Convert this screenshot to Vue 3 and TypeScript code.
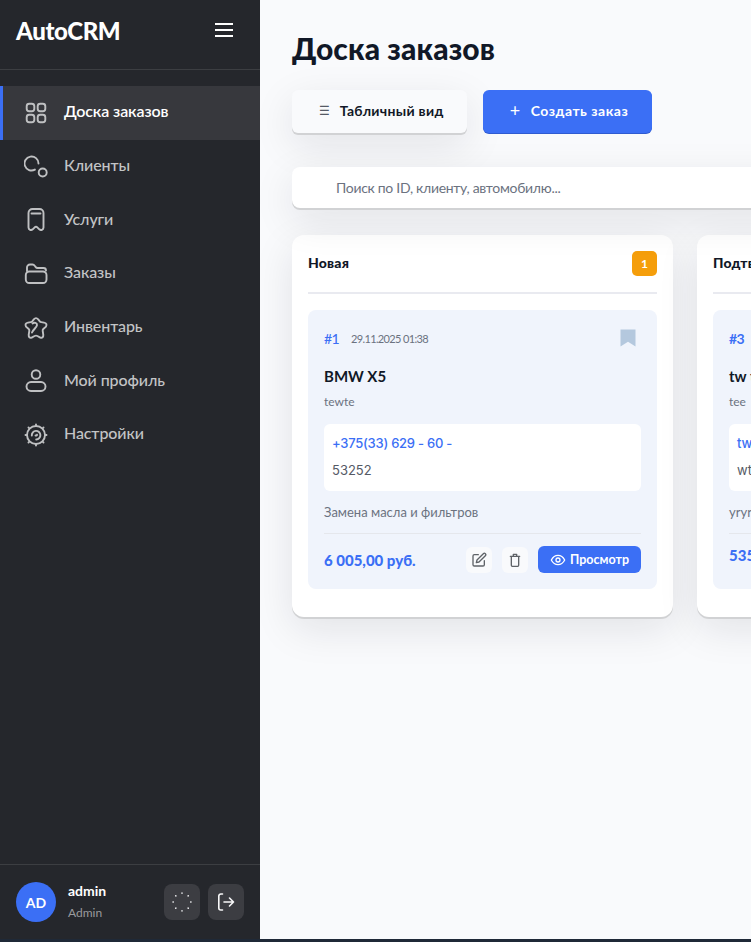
<script setup lang="ts">
const nav = [
  { label: 'Доска заказов', icon: 'board', active: true },
  { label: 'Клиенты', icon: 'clients' },
  { label: 'Услуги', icon: 'services' },
  { label: 'Заказы', icon: 'orders' },
  { label: 'Инвентарь', icon: 'inventory' },
  { label: 'Мой профиль', icon: 'profile' },
  { label: 'Настройки', icon: 'settings' },
]
</script>

<template>
  <div class="app">
    <aside class="sidebar">
      <div class="brand">
        <span class="logo">AutoCRM</span>
        <button class="burger"><i></i><i></i><i></i></button>
      </div>
      <nav class="nav">
        <a v-for="item in nav" :key="item.label" class="nav-item" :class="{ active: item.active }">
          <svg class="nav-icon" viewBox="0 0 24 24" fill="none" stroke="currentColor" stroke-width="1.9" stroke-linecap="round" stroke-linejoin="round">
            <template v-if="item.icon === 'board'">
              <rect x="2.7" y="2.7" width="7.6" height="7.6" rx="2.5" /><rect x="13.7" y="2.7" width="7.6" height="7.6" rx="2.5" />
              <rect x="2.7" y="13.7" width="7.6" height="7.6" rx="2.5" /><rect x="13.7" y="13.7" width="7.6" height="7.6" rx="2.5" />
            </template>
            <template v-else-if="item.icon === 'clients'">
              <path d="M14.500 8.500A7 7 0 1 0 10.900 14.600" /><circle cx="18.700" cy="17.500" r="4" />
            </template>
            <template v-else-if="item.icon === 'services'">
              <path d="M4.500 5a4 4 0 0 1 4-4h7a4 4 0 0 1 4 4v14.500a2.500 2.500 0 0 1-4.200 1.800l-2-2a1.800 1.800 0 0 0-2.600 0l-2 2a2.500 2.500 0 0 1-4.200-1.800Z" /><path d="M7.500 5.500h9" />
            </template>
            <template v-else-if="item.icon === 'orders'">
              <path d="M3 9V5.500A3 3 0 0 1 6 2.500h2.500c1.500 0 2 1 3 2.300.6.800 1 1.200 2 1.200h6a2.500 2.500 0 0 1 2.500 2.500" /><rect x="1.800" y="9.500" width="20.700" height="11.500" rx="3.500" />
            </template>
            <template v-else-if="item.icon === 'inventory'">
              <path d="M9.800 3.400Q12 .8 14.200 3.400L15.600 5.200Q16.200 6 17.200 6.100L20 6.600Q23.600 7.400 22 10.600L19.300 13Q18.500 13.800 18.700 14.800L19.300 18.800Q19.500 22.400 16.300 21.600L13.400 20Q12 19.300 10.600 20L7.700 21.600Q4.500 22.400 4.700 18.800L5.300 14.800Q5.500 13.800 4.700 13L2 10.600Q.4 7.400 4 6.600L6.800 6.100Q7.800 6 8.400 5.200Z" /><path d="M8.500 7.500c1.800-1.500 4.800-.8 4.500 1.700-.3 2.600-4 4.200-5 7.300" />
            </template>
            <template v-else-if="item.icon === 'profile'">
              <circle cx="12" cy="5.500" r="4.300" /><rect x="2.500" y="13" width="19" height="9" rx="4.500" />
            </template>
            <template v-else>
              <circle cx="12" cy="12" r="9" /><path d="M12 1.500V2.500M12 21.500v1M1.500 12h1M21.500 12h1M4.500 4.500l.4.4M19.100 19.100l.4.4M4.500 19.500l.4-.4M19.100 4.900l.4-.4" />
              <path d="M7.800 12.500a4.300 4.300 0 1 1 4.400 4" /><path d="M11.500 12.500c1 .300 1.500-.200 1.500-.800" />
            </template>
          </svg>
          <span class="nav-label">{{ item.label }}</span>
        </a>
      </nav>
      <div class="user">
        <div class="avatar">AD</div>
        <div class="user-text">
          <div class="user-name">admin</div>
          <div class="user-role">Admin</div>
        </div>
        <button class="square">
          <svg width="20" height="20" viewBox="0 0 20 20" fill="none" stroke="#f1f2f4" stroke-width="1.500" stroke-linecap="round">
            <path d="M10 1v.3M10 18.700v.3M1 10h.3M18.700 10h.3M3.700 3.700l.2.200M16.100 16.100l.2.200M3.700 16.300l.2-.200M16.100 3.900l.2-.200" />
          </svg>
        </button>
        <button class="square">
          <svg width="20" height="20" viewBox="0 0 20 20" fill="none" stroke="#f8f8f9" stroke-width="1.600" stroke-linecap="round" stroke-linejoin="round">
            <path d="M6.500 2H4.800a2 2 0 0 0-2 2v12a2 2 0 0 0 2 2h1.700M8 10h9.500M13.500 6l4 4-4 4" />
          </svg>
        </button>
      </div>
    </aside>

    <main class="main">
      <h1 class="title">Доска заказов</h1>
      <div class="actions">
        <button class="btn btn-light"><span class="btn-glyph">☰</span>Табличный вид</button>
        <button class="btn btn-primary"><span class="btn-plus">+</span>Создать заказ</button>
      </div>
      <div class="search">Поиск по ID, клиенту, автомобилю...</div>

      <div class="board">
        <section class="column">
          <header class="col-head">
            <span class="col-title">Новая</span>
            <span class="badge">1</span>
          </header>
          <article class="card">
            <div class="card-top">
              <span class="order-id">#1</span>
              <span class="order-date">29.11.2025 01:38</span>
              <svg class="bookmark" width="16" height="18" viewBox="0 0 16 18"><path d="M0.500 0.500h15v17L8 12.800 0.500 17.500Z" fill="#b4c8de" /></svg>
            </div>
            <div class="car">BMW X5</div>
            <div class="plate">tewte</div>
            <div class="contact">
              <div class="phone">+375(33) 629 - 60 -</div>
              <div class="phone-rest">53252</div>
            </div>
            <div class="service">Замена масла и фильтров</div>
            <footer class="card-foot">
              <span class="price">6 005,00 руб.</span>
              <div class="card-actions">
                <button class="icon-btn">
                  <svg width="16" height="16" viewBox="0 0 24 24" fill="none" stroke="#5f6368" stroke-width="2" stroke-linecap="round" stroke-linejoin="round">
                    <path d="M11 4H5a2 2 0 0 0-2 2v13a2 2 0 0 0 2 2h13a2 2 0 0 0 2-2v-6" /><path d="M18.500 2.500a2.100 2.100 0 0 1 3 3L12 15l-4 1 1-4Z" />
                  </svg>
                </button>
                <button class="icon-btn">
                  <svg width="16" height="16" viewBox="0 0 24 24" fill="none" stroke="#5f6368" stroke-width="2" stroke-linecap="round" stroke-linejoin="round">
                    <path d="M5 6.500h14M9.500 6.500V3.500h5v3M6.500 6.500V20a1.500 1.500 0 0 0 1.500 1.500h8a1.500 1.500 0 0 0 1.500-1.500V6.500" />
                  </svg>
                </button>
                <button class="view-btn">
                  <svg width="16" height="16" viewBox="0 0 24 24" fill="none" stroke="#fff" stroke-width="2" stroke-linecap="round" stroke-linejoin="round">
                    <path d="M2 12s3.600-7 10-7 10 7 10 7-3.600 7-10 7-10-7-10-7Z" /><circle cx="12" cy="12" r="3" />
                  </svg>
                  Просмотр
                </button>
              </div>
            </footer>
          </article>
        </section>

        <section class="column">
          <header class="col-head">
            <span class="col-title">Подтверждена</span>
            <span class="badge">1</span>
          </header>
          <article class="card">
            <div class="card-top">
              <span class="order-id third">#3</span>
              <span class="order-date">29.11.2025 01:38</span>
            </div>
            <div class="car">tw tw</div>
            <div class="plate">tee</div>
            <div class="contact">
              <div class="phone">tw tw</div>
              <div class="phone-rest">wt</div>
            </div>
            <div class="service">yryry</div>
            <footer class="card-foot">
              <span class="price">535,00 руб.</span>
            </footer>
          </article>
        </section>
      </div>
    </main>
  </div>
</template>

<style>
html, body { margin: 0; background: #1f2937; overflow: hidden; }
</style>

<style scoped>
.app {
  display: flex;
  width: 751px;
  height: 939px;
  overflow: hidden;
  font-family: "Lato", "Noto Sans", sans-serif;
  background: #f9fafc;
}
button { border: 0; font: inherit; cursor: pointer; padding: 0; }
.sidebar {
  width: 260px;
  flex: none;
  display: flex;
  flex-direction: column;
  background: #25272c;
}
.brand {
  height: 70px;
  box-sizing: border-box;
  padding: 0 27px 9px 16px;
  display: flex;
  align-items: center;
  justify-content: space-between;
  border-bottom: 1px solid #3c3e42;
}
.logo { color: #fff; font-size: 24px; font-weight: 900; letter-spacing: -0.4px; }
.burger { width: 18px; height: 14px; background: none; display: flex; flex-direction: column; justify-content: space-between; }
.burger i { display: block; height: 2px; background: #fff; }
.nav { padding-top: 16px; display: flex; flex-direction: column; flex: 1; }
.nav-item {
  height: 53.7px;
  box-sizing: border-box;
  display: flex;
  align-items: center;
  gap: 16px;
  color: #c3c4c6;
  font-size: 16px;
  font-weight: 500;
  border-left: 3px solid transparent;
  padding-left: 21px;
}
.nav-item.active { background: #37383d; border-left-color: #3b6ff5; }
.nav-item.active .nav-label { color: #fff; font-weight: 600; }
.nav-label { padding-bottom: 4px; letter-spacing: -0.1px; }
.nav-icon { width: 24px; height: 24px; flex: none; color: #bfc0c2; }
.user {
  height: 75px;
  box-sizing: border-box;
  border-top: 1px solid #3c3e42;
  padding: 0 16px;
  display: flex;
  align-items: center;
  gap: 8px;
}
.avatar {
  width: 40px; height: 40px; border-radius: 50%;
  background: #3b6ff5; color: #fff;
  display: flex; align-items: center; justify-content: center;
  font-weight: 700; font-size: 14px;
  margin-right: 4px;
}
.user-text { flex: 1; display: flex; flex-direction: column; gap: 6px; padding-bottom: 2px; }
.user-name { color: #fff; font-size: 14px; font-weight: 700; }
.user-role { color: #9a9b9e; font-size: 12px; }
.square {
  width: 36px; height: 36px; border-radius: 8px;
  background: #3c3d42;
  display: flex; align-items: center; justify-content: center;
}
.main { flex: 1; min-width: 0; padding: 30px 0 0 32px; background: #f9fafc; overflow: hidden; }
.title { margin: 0; font-size: 30px; line-height: 36px; font-weight: 900; color: #111827; letter-spacing: 0.1px; }
.actions { margin-top: 24px; display: flex; gap: 16px; }
.btn {
  height: 43px; border-radius: 6px;
  display: flex; align-items: center; justify-content: center;
  font-size: 14px; font-weight: 700;
  padding-bottom: 3px;
  letter-spacing: 0.3px;
}
.btn-light {
  width: 175px; background: #f9fafc; color: #111827; gap: 9px;
  padding-left: 4px;
  box-shadow: 0 2px 0 #d1d2d4, 0 12px 40px rgba(17, 24, 39, 0.1);
}
.btn-glyph { color: #555a65; font-size: 12px; font-weight: 400; }
.btn-primary {
  width: 169px; background: #3b6ff5; color: #fff; gap: 10px;
  letter-spacing: 0.5px;
  padding-left: 3px;
  box-shadow: 0 1px 0 #2f5bd0;
}
.btn-plus { font-size: 18px; font-weight: 400; line-height: 1; }
.search {
  margin-top: 34px;
  width: 600px;
  height: 41px;
  box-sizing: border-box;
  padding-left: 44px;
  display: flex; align-items: center;
  background: #fff;
  border-radius: 8px 0 0 8px;
  color: #6b7280;
  font-size: 14px;
  letter-spacing: -0.3px;
  position: relative;
  z-index: 1;
  box-shadow: 0 2px 0 #d1d2d4, 0 12px 40px rgba(17, 24, 39, 0.1);
}
.board { margin-top: 27px; display: flex; gap: 24px; width: 800px; }
.column {
  width: 381px; flex: none;
  box-sizing: border-box;
  height: 382px;
  padding: 0 16px;
  background: #fff;
  border-radius: 12px;
  box-shadow: 0 2px 0 #d1d2d4, 0 12px 40px rgba(17, 24, 39, 0.1);
}
.col-head {
  height: 59px;
  box-sizing: border-box;
  margin-bottom: 16px;
  display: flex; align-items: center; justify-content: space-between;
  border-bottom: 2px solid #e9eaf0;
}
.col-title { font-size: 14px; font-weight: 900; color: #111827; letter-spacing: 0.2px; padding-bottom: 2px; }
.badge {
  width: 25px; height: 25px; border-radius: 5px;
  background: #f59e0b; color: #fff;
  display: flex; align-items: center; justify-content: center;
  font-size: 12px; font-weight: 700;
}
.card {
  background: #f0f4fc;
  border-radius: 8px;
  padding: 16px;
  height: 279px;
  box-sizing: border-box;
}
.card-top { display: flex; align-items: center; height: 24px; position: relative; }
.order-id { color: #3b6ff5; font-size: 14px; font-weight: 500; margin-right: 12px; letter-spacing: -0.6px; }
.order-id.third { font-weight: 700; }
.order-date { color: #6b7280; font-size: 11px; letter-spacing: -0.65px; }
.bookmark { margin-left: auto; margin-right: 5px; }
.car { margin-top: 16px; font-size: 15px; font-weight: 700; color: #111827; line-height: 20px; }
.plate { margin-top: 6px; font-size: 12px; color: #6b7280; line-height: 20px; }
.contact {
  margin-top: 12px;
  background: #fff;
  border-radius: 6px;
  padding: 8px;
  height: 67px;
  box-sizing: border-box;
}
.phone { color: #3b6ff5; font-size: 13px; font-weight: 500; letter-spacing: -0.25px; line-height: 22px; font-family: "Inter", sans-serif; }
.phone-rest { margin-top: 5px; color: #555a65; font-size: 13px; line-height: 22px; font-family: "Inter", sans-serif; }
.service { margin-top: 12px; color: #6b7280; font-size: 13px; line-height: 18px; }
.card-foot {
  margin-top: 12px;
  padding-top: 12px;
  border-top: 1px solid #e5e7ec;
  display: flex; align-items: center; justify-content: space-between;
}
.price { color: #3b6ff5; font-size: 15px; font-weight: 900; }
.card-actions { display: flex; gap: 10px; align-items: center; }
.icon-btn {
  width: 26px; height: 26px; border-radius: 6px;
  background: #f9fafc;
  display: flex; align-items: center; justify-content: center;
}
.view-btn {
  width: 103px; height: 27px; border-radius: 6px;
  background: #3b6ff5; color: #fff;
  display: flex; align-items: center; justify-content: center; gap: 4px;
  font-size: 12.5px; font-weight: 700;
}
</style>
